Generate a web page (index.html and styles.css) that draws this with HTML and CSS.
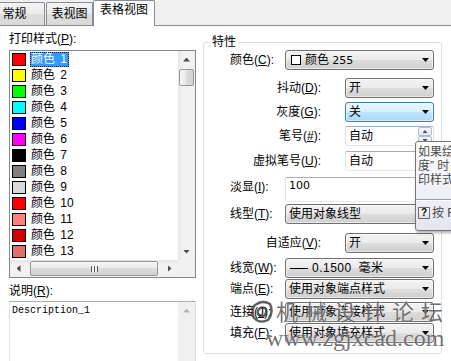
FILE: index.html
```html
<!DOCTYPE html>
<html lang="zh-CN">
<head>
<meta charset="utf-8">
<title>打印样式表编辑器 - 表格视图</title>
<link rel="stylesheet" href="styles.css">
</head>
<body>
<div class="tabs">
  <div class="tab tab-first">常规</div>
  <div class="tab tab-second">表视图</div>
  <div class="tab tab-active">表格视图</div>
</div>

<div class="page">
  <div class="left">
    <div class="lbl lbl-styles">打印样式(<u>P</u>):</div>
    <div class="listbox">
      <div class="list-items">
        <div class="item"><span class="sw" style="background:#ff0000"></span><span class="name sel">颜色 1</span></div>
        <div class="item"><span class="sw" style="background:#ffff00"></span><span class="name">颜色 2</span></div>
        <div class="item"><span class="sw" style="background:#00ff00"></span><span class="name">颜色 3</span></div>
        <div class="item"><span class="sw" style="background:#00ffff"></span><span class="name">颜色 4</span></div>
        <div class="item"><span class="sw" style="background:#0000ff"></span><span class="name">颜色 5</span></div>
        <div class="item"><span class="sw" style="background:#ff00ff"></span><span class="name">颜色 6</span></div>
        <div class="item"><span class="sw" style="background:#000000"></span><span class="name">颜色 7</span></div>
        <div class="item"><span class="sw" style="background:#808080"></span><span class="name">颜色 8</span></div>
        <div class="item"><span class="sw" style="background:#d9d9d9"></span><span class="name">颜色 9</span></div>
        <div class="item"><span class="sw" style="background:#ff0000"></span><span class="name">颜色 10</span></div>
        <div class="item"><span class="sw" style="background:#ff7f7f"></span><span class="name">颜色 11</span></div>
        <div class="item"><span class="sw" style="background:#d40000"></span><span class="name">颜色 12</span></div>
        <div class="item"><span class="sw" style="background:#e07070"></span><span class="name">颜色 13</span></div>
        <div class="item"><span class="sw" style="background:#a50000"></span><span class="name">颜色 14</span></div>
      </div>
      <div class="vscroll">
        <div class="sb-btn"><span class="tri tri-up"></span></div>
        <div class="thumb-v"></div>
        <div class="sb-fill"></div>
        <div class="sb-btn"><span class="tri tri-down"></span></div>
      </div>
      <div class="hscroll">
        <div class="sb-btn sb-btn-h"><span class="tri tri-left"></span></div>
        <div class="thumb-h"><span class="grip"></span></div>
        <div class="sb-fill"></div>
        <div class="sb-btn sb-btn-h"><span class="tri tri-right"></span></div>
      </div>
      <div class="sb-corner"></div>
    </div>

    <div class="lbl lbl-desc">说明(<u>R</u>):</div>
    <div class="textarea">
      <div class="ta-text">Description_1</div>
      <div class="vscroll vscroll-dis">
        <div class="sb-btn"><span class="tri tri-up tri-dis"></span></div>
      </div>
    </div>
  </div>

  <fieldset class="group">
    <legend>特性</legend>
    <div class="grid">
      <div class="lab">颜色(<u>C</u>):</div>
      <div class="combo ctl"><span class="white-box"></span><span>颜色 <span class="num">255</span></span></div>

      <div class="lab lab-n">抖动(<u>D</u>):</div>
      <div class="combo ctl-n">开</div>

      <div class="lab lab-n">灰度(<u>G</u>):</div>
      <div class="combo combo-focus ctl-n">关</div>

      <div class="lab lab-n">笔号(<u>#</u>):</div>
      <div class="edit ctl-n"><span>自动</span>
        <span class="spin"><span class="spin-btn"><span class="tri tri-up tri-spin"></span></span><span class="spin-btn"><span class="tri tri-down tri-spin"></span></span></span>
      </div>

      <div class="lab lab-n">虚拟笔号(<u>U</u>):</div>
      <div class="edit ctl-n"><span>自动</span></div>

      <div class="lab">淡显(<u>I</u>):</div>
      <div class="edit edit-tall ctl"><span class="num">100</span></div>

      <div class="lab">线型(<u>T</u>):</div>
      <div class="combo ctl">使用对象线型</div>

      <div class="lab lab-n">自适应(<u>V</u>):</div>
      <div class="combo ctl-n">开</div>

      <div class="lab">线宽(<u>W</u>):</div>
      <div class="combo ctl"><span class="lw-line"></span><span class="lw-text">0.1500 毫米</span></div>

      <div class="lab">端点(<u>E</u>):</div>
      <div class="combo ctl">使用对象端点样式</div>

      <div class="lab">连接(<u>J</u>):</div>
      <div class="combo ctl">使用对象连接样式</div>

      <div class="lab">填充(<u>F</u>):</div>
      <div class="combo ctl">使用对象填充样式</div>
    </div>
  </fieldset>
</div>

<div class="tooltip">
  <div class="tip-text">如果绘图仪配置为“灰<br>度” 时，将对象颜色转换<br>印样式中的颜色</div>
  <div class="tip-sep"></div>
  <div class="tip-help"><span class="help-icon">?</span>按 F1 键获得更多帮助</div>
</div>

<div class="wm">
  <svg class="wm-logo" width="24" height="26" viewBox="0 0 24 26">
    <path d="M4 7 Q12 0 20 5 Q24 13 18 21 Q10 25 4 19 Q1 13 4 7 Z M9 10 Q13 7 16 10 Q17 14 14 17 Q10 18 8 15 Q7 12 9 10 Z" fill="none" stroke="rgba(55,55,55,0.8)" stroke-width="2.4"/>
  </svg>
  <span class="wm-cn">机械设计论坛</span>
  <span class="wm-url">www.zgjxcad.com</span>
</div>
</body>
</html>
```

FILE: styles.css
```css
* { box-sizing: border-box; }
html, body { margin: 0; padding: 0; }
body {
  width: 451px;
  height: 361px;
  overflow: hidden;
  position: relative;
  background: #ffffff;
  color: #000;
  font-family: "Liberation Sans", "Noto Sans CJK SC", sans-serif;
  font-size: 12px;
  line-height: 14px;
}
u { text-decoration: underline; text-underline-offset: 1px; }

/* ---------- tabs ---------- */
.tabs {
  display: flex;
  align-items: flex-end;
  height: 26px;
  background: #f0f0f0;
  border-bottom: 1px solid #898c95;
}
.tab {
  height: 23px;
  line-height: 22px;
  text-align: center;
  white-space: nowrap;
  border: 1px solid #898c95;
  border-bottom: 0;
  border-radius: 2px 2px 0 0;
  background: linear-gradient(#f4f4f4, #e9e9e9 50%, #dedede 50%, #d9d9d9);
}
.tab-first { width: 61px; margin-left: -16px; }
.tab-second { width: 47px; margin-left: 1px; }
.tab-active {
  width: 62px;
  height: 26px;
  line-height: 19px;
  margin-bottom: -1px;
  background: #ffffff;
}

/* ---------- page ---------- */
.page {
  display: flex;
  align-items: flex-start;
  gap: 7px;
  padding-left: 9px;
}
.left { width: 187px; flex: none; }
.lbl { line-height: 14px; white-space: nowrap; }
.lbl-styles { margin-top: 6px; margin-bottom: 4px; }
.lbl-desc { margin-top: 6px; margin-bottom: 3px; }

/* ---------- list box ---------- */
.listbox {
  height: 228px;
  border: 1px solid #828790;
  background: #fff;
  display: grid;
  grid-template-columns: 1fr 17px;
  grid-template-rows: 1fr 17px;
}
.list-items { overflow: hidden; }
.item {
  display: flex;
  align-items: center;
  height: 16px;
  padding-left: 2px;
}
.sw {
  flex: none;
  width: 14px;
  height: 13px;
  border: 1px solid #000;
}
.name {
  margin-left: 4px;
  padding: 0 2px 0 1px;
  line-height: 15px;
  white-space: pre;
  word-spacing: 2px;
}
.sel {
  background: #3399ff;
  color: #fff;
  outline: 1px dotted #1a1a1a;
  outline-offset: -1px;
}

/* ---------- scrollbars ---------- */
.vscroll {
  display: flex;
  flex-direction: column;
  background: linear-gradient(to right, #e6e6e6, #f2f2f2 30%, #f0f0f0);
}
.hscroll {
  display: flex;
  background: linear-gradient(#e6e6e6, #f2f2f2 30%, #f0f0f0);
}
.sb-corner { background: #f0f0f0; }
.sb-btn {
  flex: none;
  height: 17px;
  display: flex;
  align-items: center;
  justify-content: center;
}
.sb-btn-h { width: 17px; height: auto; }
.sb-fill { flex: 1; }
.tri {
  display: block;
  background: #4d4d4d;
}
.tri-up { width: 7px; height: 4px; clip-path: polygon(50% 0, 100% 100%, 0 100%); }
.tri-down { width: 7px; height: 4px; clip-path: polygon(0 0, 100% 0, 50% 100%); }
.tri-left { width: 4px; height: 7px; clip-path: polygon(100% 0, 100% 100%, 0 50%); }
.tri-right { width: 4px; height: 7px; clip-path: polygon(0 0, 100% 50%, 0 100%); }
.tri-dis { background: #b4b4b4; }
.thumb-v {
  flex: none;
  height: 17px;
  margin: 1px 1px 0 1px;
  border: 1px solid #979797;
  border-radius: 2px;
  background: linear-gradient(to right, #f6f6f6, #e9e9e9 50%, #dcdcdc 50%, #d2d2d2);
}
.thumb-h {
  flex: none;
  width: 128px;
  margin: 1px 0 1px 3px;
  border: 1px solid #979797;
  border-radius: 2px;
  background: linear-gradient(#f6f6f6, #e9e9e9 50%, #dcdcdc 50%, #d2d2d2);
  display: flex;
  align-items: center;
  justify-content: center;
}
.grip {
  width: 7px;
  height: 6px;
  background: repeating-linear-gradient(to right, #555 0 1px, #f4f4f4 1px 3px);
}

/* ---------- description ---------- */
.textarea {
  height: 70px;
  border: 1px solid;
  border-color: #abadb3 #dbdfe6 #e3e9ef #e2e3ea;
  display: grid;
  grid-template-columns: 1fr 17px;
}
.ta-text {
  padding: 2px 2px;
  font-family: "Liberation Mono", "DejaVu Sans Mono", monospace;
  font-size: 10px;
  line-height: 14px;
}
.vscroll-dis { background: #f0f0f0; }

/* ---------- property group ---------- */
.group {
  flex: none;
  width: 239px;
  min-width: 0;
  margin: 9px 0 0 0;
  padding: 1px 7px 10px 6px;
  border: 1px solid #d5dfe5;
  border-radius: 3px;
}
.group legend {
  padding: 0 2px;
  line-height: 14px;
}
.grid {
  margin-left: 20px;
  display: grid;
  grid-template-columns: 55px 60px 89px;
  grid-template-rows: 28px 24px 24px 25px 26px 27px 29px 25px 21px 23px 21px 20px;
  align-items: start;
}
.lab {
  grid-column: 1;
  line-height: 20px;
  white-space: nowrap;
}
.lab-n {
  grid-column: 1 / 3;
  text-align: right;
  padding-right: 24px;
}
.ctl { grid-column: 2 / 4; }
.ctl-n { grid-column: 3; }

.combo {
  height: 20px;
  display: flex;
  align-items: center;
  padding: 0 4px 0 3px;
  border: 1px solid #707070;
  border-radius: 3px;
  background: linear-gradient(#f2f2f2, #ebebeb 48%, #dddddd 52%, #cfcfcf);
  box-shadow: inset 0 0 0 1px rgba(255, 255, 255, 0.55);
  white-space: nowrap;
  line-height: 16px;
}
.combo::after {
  content: "";
  flex: none;
  margin-left: auto;
  width: 7px;
  height: 4px;
  background: #000;
  clip-path: polygon(0 0, 100% 0, 50% 100%);
}
.combo-focus {
  border-color: #3c7fb1;
  background: linear-gradient(#eaf6fd, #d9f0fc 48%, #bee6fd 52%, #a7d9f5);
}
.white-box {
  flex: none;
  width: 10px;
  height: 10px;
  margin: 0 4px 0 2px;
  border: 1px solid #000;
  background: #fff;
}
.num { font-family: "DejaVu Sans", "Liberation Sans", sans-serif; font-size: 11px; }
.lw-line {
  flex: none;
  width: 18px;
  height: 1px;
  background: #000;
  margin: 0 4px 0 1px;
}
.lw-text { letter-spacing: 0.5px; word-spacing: 3px; }

.edit {
  height: 20px;
  display: flex;
  align-items: center;
  padding: 0 1px 0 3px;
  border: 1px solid;
  border-color: #abadb3 #dbdfe6 #e3e9ef #e2e3ea;
  border-radius: 2px;
  background: #fff;
  line-height: 16px;
  white-space: nowrap;
}
.edit-tall {
  height: 25px;
  align-items: flex-start;
  padding-top: 1px;
}
.edit-tall .num { line-height: 13px; }
.spin {
  margin-left: auto;
  width: 14px;
  height: 18px;
  display: flex;
  flex-direction: column;
}
.spin-btn {
  flex: 1;
  display: flex;
  align-items: center;
  justify-content: center;
  border: 1px solid #b5bcc7;
  border-radius: 2px;
  background: linear-gradient(#f6f8fa, #e3e8ee);
}
.tri-spin { width: 5px; height: 3px; background: #3d5580; }

/* ---------- tooltip (floats over the dialog) ---------- */
.tooltip {
  position: absolute;
  left: 415px;
  top: 141px;
  width: 70px;
  height: 90px;
  padding: 3px 0 0 2px;
  border: 1px solid #767676;
  border-radius: 3px;
  background: linear-gradient(#ffffff, #e4e5f0);
  box-shadow: 1px 2px 3px rgba(0, 0, 0, 0.3);
  overflow: hidden;
  white-space: nowrap;
  color: #4c4c4c;
}
.tip-text { line-height: 14px; }
.tip-sep {
  margin: 12px 0 0 -2px;
  height: 2px;
  border-top: 1px solid #9f9f9f;
  border-bottom: 1px solid #ffffff;
}
.tip-help {
  display: flex;
  align-items: center;
  margin-top: 4px;
  line-height: 16px;
}
.help-icon {
  flex: none;
  width: 12px;
  height: 12px;
  margin-right: 2px;
  border: 1px solid #6d6d6d;
  background: linear-gradient(#ffffff, #dedede);
  font-size: 10px;
  font-weight: bold;
  line-height: 10px;
  text-align: center;
  color: #000;
}

/* ---------- watermark (overlays the controls) ---------- */
.wm-logo { position: absolute; left: 250px; top: 299px; }
.wm-cn {
  position: absolute;
  left: 276px;
  top: 296px;
  font-family: "Noto Sans CJK SC", sans-serif;
  font-size: 22px;
  line-height: 28px;
  letter-spacing: 7px;
  color: rgba(55, 55, 55, 0.72);
  text-shadow: 0 0 1px #fff;
  white-space: nowrap;
}
.wm-url {
  position: absolute;
  left: 266px;
  top: 324px;
  font-family: "Liberation Serif", serif;
  font-size: 24px;
  line-height: 28px;
  color: rgba(55, 55, 55, 0.72);
  text-shadow: 0 0 1px #fff;
  white-space: nowrap;
}
```
